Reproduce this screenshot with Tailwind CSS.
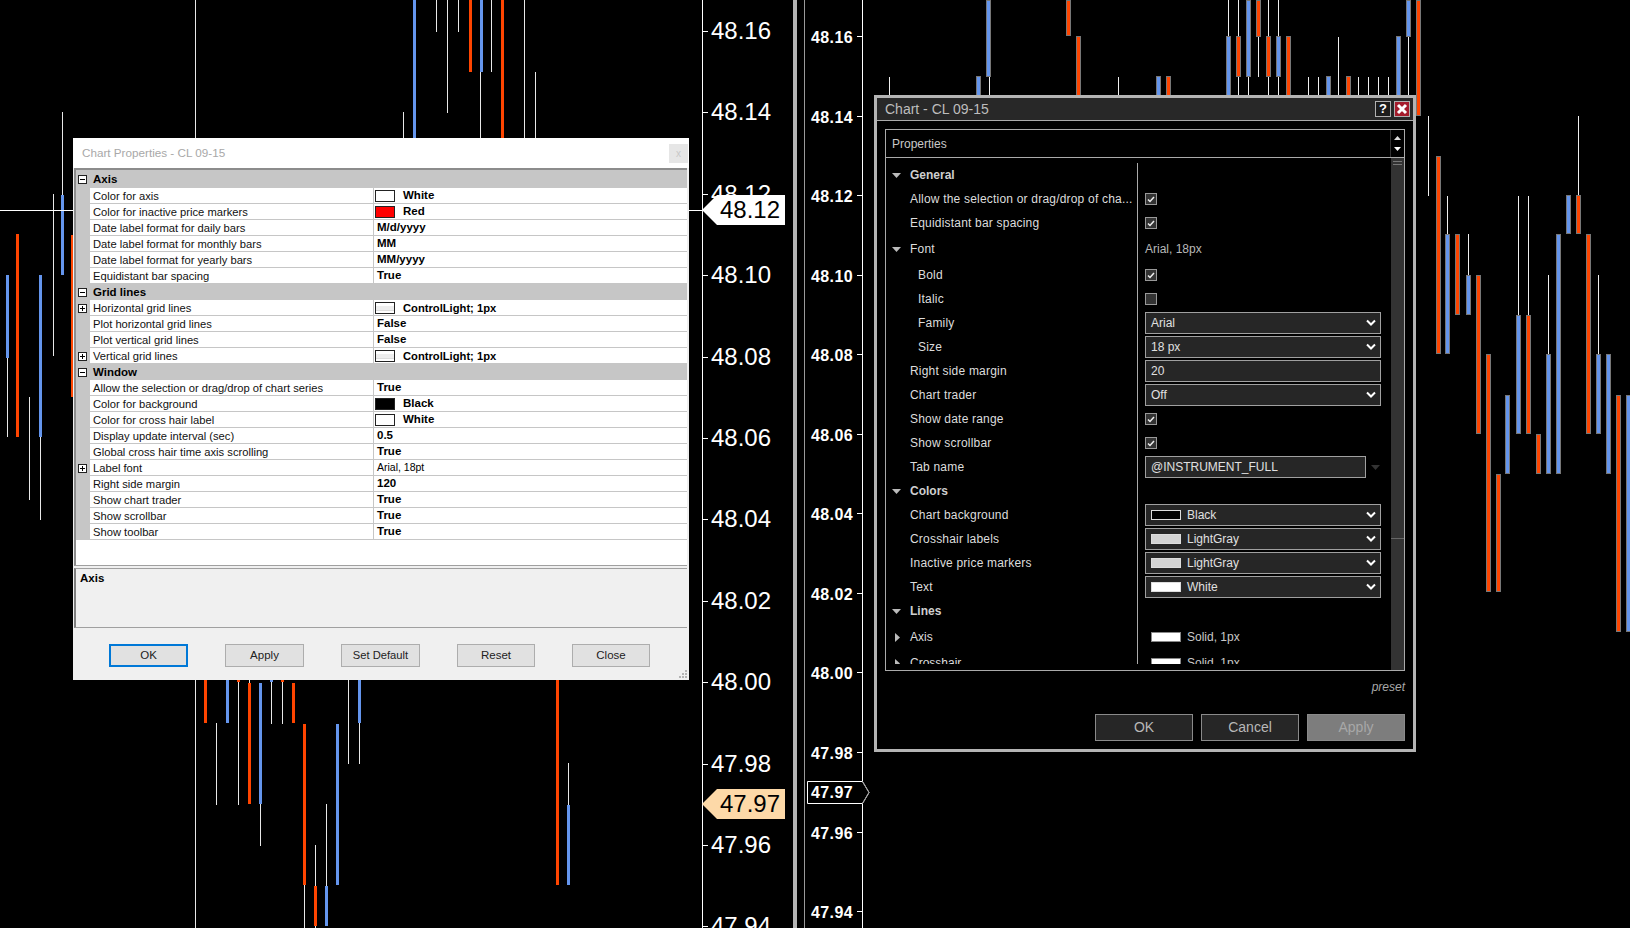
<!DOCTYPE html>
<html>
<head>
    <title>Chart properties</title>
    <script src="https://cdn.jsdelivr.net/npm/@tailwindcss/browser@4"></script>
</head>
<body class="bg-black font-['Liberation_Sans',Arial,sans-serif]">
<div class="relative w-[1630px] h-[928px] overflow-hidden bg-black" id="desk">

    <!-- charts go in here -->
    <div id="leftChart" class="absolute inset-0"></div>
    <div id="rightChart" class="absolute inset-0"></div>

    <!-- separator between the two chart windows -->
    <div class="absolute left-[793px] top-0 w-[4px] h-[928px] bg-[#b4b4b4]"></div>
    <div class="absolute left-[804px] top-0 w-px h-[928px] bg-[#9a9a9a]"></div>

    <!-- price markers -->
    <div class="absolute left-[702px] top-[195px] w-[83px] h-[30px] flex items-center">
        <svg class="absolute inset-0" width="83" height="30"><polygon points="0,15 15,0 83,0 83,30 15,30" fill="#ffffff"/></svg>
        <span class="relative ml-[18px] text-[24px] text-black">48.12</span>
    </div>
    <div class="absolute left-[702px] top-[789px] w-[83px] h-[30px] flex items-center">
        <svg class="absolute inset-0" width="83" height="30"><polygon points="0,15 15,0 83,0 83,30 15,30" fill="#fdd9a8"/></svg>
        <span class="relative ml-[18px] text-[24px] text-black">47.97</span>
    </div>
    <div class="absolute left-[807px] top-[781px] w-[63px] h-[23px] flex items-center">
        <svg class="absolute inset-0" width="63" height="23"><polygon points="0.5,0.5 55.5,0.5 62,11.5 55.5,22.5 0.5,22.5" fill="#000" stroke="#fff"/><polyline points="55.5,0.5 62,11.5 55.5,22.5" fill="none" stroke="#999"/></svg>
        <span class="relative ml-[4px] pt-px text-[16px] font-bold tracking-[0.4px] text-white">47.97</span>
    </div>

    <!-- Left dialog: Chart Properties -->
    <div class="absolute left-[73px] top-[138px] w-[616px] h-[542px] bg-[#f0f0f0] flex flex-col">
        <div class="h-[30px] shrink-0 bg-white flex items-center justify-between pl-[9px] pr-px">
            <span class="text-[11.7px] text-[#a8a8a8]">Chart Properties - CL 09-15</span>
            <div class="w-[19px] h-[19px] bg-[#e6e6e6] flex items-center justify-center text-[10px] text-[#c8c8c8]">x</div>
        </div>
        <div class="ml-px w-[613px] h-[398px] shrink-0 border-l-2 border-t-2 border-b border-[#8c8c8c] border-b-[#a0a0a0] bg-white" id="propGrid"></div>
        <div class="ml-px mt-[2px] w-[613px] h-[60px] shrink-0 border-l-2 border-t border-b border-[#a0a0a0] border-l-[#808080] px-[4px] pt-[2px]">
            <div class="text-[11.5px] font-bold leading-[14px] text-black">Axis</div>
        </div>
        <div class="flex gap-[37px] pl-[36px] mt-[16px]">
            <div class="w-[79px] h-[23px] bg-[#e1e1e1] border-2 border-[#0078d7] flex items-center justify-center text-[11.5px] text-[#222]">OK</div>
            <div class="w-[79px] h-[23px] bg-[#e1e1e1] border border-[#adadad] flex items-center justify-center text-[11.5px] text-[#222]">Apply</div>
            <div class="w-[79px] h-[23px] bg-[#e1e1e1] border border-[#adadad] flex items-center justify-center text-[11.2px] text-[#222]">Set Default</div>
            <div class="w-[78px] h-[23px] bg-[#e1e1e1] border border-[#adadad] flex items-center justify-center text-[11.5px] text-[#222]">Reset</div>
            <div class="w-[78px] h-[23px] bg-[#e1e1e1] border border-[#adadad] flex items-center justify-center text-[11.5px] text-[#222]">Close</div>
        </div>
        <svg class="absolute right-[1px] bottom-[1px]" width="9" height="9" fill="#b4b4b4"><rect x="6" y="0" width="2" height="2"/><rect x="3" y="3" width="2" height="2"/><rect x="6" y="3" width="2" height="2"/><rect x="0" y="6" width="2" height="2"/><rect x="3" y="6" width="2" height="2"/><rect x="6" y="6" width="2" height="2"/></svg>
    </div>

    <!-- Right dialog: Chart - CL 09-15 -->
    <div class="absolute left-[874px] top-[95px] w-[542px] h-[657px] border-[3px] border-[#b4b4b4] bg-black flex flex-col">
        <div class="h-[23px] shrink-0 bg-[#282828] border-b border-[#aaaaaa] flex items-center justify-between pl-[8px] pr-[3px]">
            <span class="text-[14px] text-[#bdbdbd]">Chart - CL 09-15</span>
            <div class="flex gap-[3px]">
                <div class="w-[16px] h-[16px] border border-[#b0b0b0] bg-[#1c1c1c] flex items-center justify-center text-[13px] font-bold text-white">?</div>
                <div class="w-[16px] h-[16px] border border-[#b0b0b0] bg-[#a51c2c] flex items-center justify-center">
                    <svg width="12" height="12" viewBox="0 0 12 12"><path d="M2 2 L10 10 M10 2 L2 10" stroke="#fff" stroke-width="3"/></svg>
                </div>
            </div>
        </div>
        <div class="ml-[8px] mt-[8px] w-[520px] h-[542px] shrink-0 border border-[#aaaaaa] flex flex-col">
            <div class="h-[28px] shrink-0 border-b border-[#aaaaaa] flex justify-between">
                <span class="pl-[6px] pt-[7px] text-[12px] leading-[14px] text-[#c8c8c8]">Properties</span>
                <div class="w-[14px] border-l border-[#333] flex flex-col items-center justify-between py-[6px]">
                    <svg width="7" height="4"><polygon points="0,4 3.5,0 7,4" fill="#ddd"/></svg>
                    <svg width="7" height="4"><polygon points="0,0 7,0 3.5,4" fill="#fff"/></svg>
                </div>
            </div>
            <div class="flex flex-1 min-h-0">
                <div class="flex-1 min-w-0 pt-[5px]">
                    <div class="h-[501px] overflow-hidden" id="propList"></div>
                </div>
                <div class="w-[13px] bg-[#333333] flex flex-col">
                    <div class="h-[381px] border-b border-[#666] flex flex-col gap-[2px] items-center pt-[3px]">
                        <div class="w-[9px] h-px bg-[#777]"></div>
                        <div class="w-[9px] h-px bg-[#777]"></div>
                    </div>
                </div>
            </div>
        </div>
        <div class="mt-[8px] ml-[8px] w-[520px] text-right text-[12px] italic leading-[16px] text-[#a8a8a8]">preset</div>
        <div class="mt-[19px] ml-[218px] flex gap-[8px]">
            <div class="w-[98px] h-[27px] bg-[#262626] border border-[#8a8a8a] flex items-center justify-center text-[14px] text-[#b8b8b8]">OK</div>
            <div class="w-[98px] h-[27px] bg-[#262626] border border-[#8a8a8a] flex items-center justify-center text-[14px] text-[#b8b8b8]">Cancel</div>
            <div class="w-[98px] h-[27px] bg-[#7d7d7d] border border-[#8a8a8a] flex items-center justify-center text-[14px] text-[#a8a8a8]">Apply</div>
        </div>
    </div>
</div>

<script>
    // candles: [x, top, bottom]
    function addBars(host, list, cls, off) {
        list.forEach(function (b) {
            var d = document.createElement("div");
            d.className = cls;
            d.style.left = (b[0] - off) + "px";
            d.style.top = b[1] + "px";
            d.style.height = (b[2] - b[1]) + "px";
            host.appendChild(d);
        });
    }

    var left = document.getElementById("leftChart");
    var lWicks = [[7,358,437],[29,397,500],[40,437,520],[53,194,356],[62,112,195],[195,0,928],[403,112,138],[436,0,32],[447,0,113],[458,0,32],[480,72,138],[491,0,72],[524,0,138],[535,72,138],
        [216,723,805],[238,680,805],[249,680,683],[260,804,846],[271,680,724],[282,680,724],[304,885,928],[315,845,928],[326,804,886],[348,680,764],[359,723,764],[568,763,805]];
    var lBlue = [[7,275,358],[40,275,437],[62,195,275],[414,0,138],[481,0,72],[227,680,723],[260,683,804],[271,680,682],[326,886,926],[337,724,885],[359,680,723],[568,805,885]];
    var lOrange = [[17,234,437],[72,235,397],[470,0,72],[502,0,138],[205,680,723],[238,680,682],[249,683,804],[282,680,682],[293,683,723],[304,724,885],[315,886,926],[557,680,885]];
    addBars(left, lWicks, "absolute w-px bg-[#e8e8e8]", 0);
    addBars(left, lBlue, "absolute w-[3px] bg-[#6495ed]", 1);
    addBars(left, lOrange, "absolute w-[3px] bg-[#ff4500]", 1);

    var right = document.getElementById("rightChart");
    var rWicks = [[889,77,96],[989,77,96],[1118,77,96],[1228,0,36],[1238,0,36],[1238,77,96],[1248,77,96],[1258,36,77],[1268,0,36],[1268,77,96],[1278,0,36],[1278,77,96],[1308,77,96],[1318,77,96],[1338,37,96],[1358,77,96],[1368,77,96],[1378,77,96],[1388,77,96],[1408,37,96],[1428,116,196],[1447,196,234],[1468,234,275],[1518,196,315],[1528,196,315],[1548,275,395],[1578,116,195],[1598,275,354]];
    var rBlue = [[978,76,96],[988,0,77],[1158,76,96],[1228,36,96],[1248,0,77],[1278,36,77],[1328,76,96],[1398,36,96],[1408,0,37],[1447,234,354],[1468,275,315],[1507,395,474],[1518,315,434],[1548,354,474],[1558,234,474],[1568,195,234],[1598,354,434],[1608,354,474],[1628,395,632]];
    var rOrange = [[1068,0,36],[1078,36,96],[1168,76,96],[1238,36,77],[1258,0,37],[1268,36,77],[1288,36,96],[1348,76,96],[1418,0,116],[1438,156,354],[1457,234,315],[1478,275,434],[1488,354,592],[1498,474,592],[1528,315,434],[1538,434,474],[1578,195,234],[1588,234,434],[1618,395,632]];
    addBars(right, rWicks, "absolute w-px bg-[#f0f0f0]", 0);
    addBars(right, rBlue, "absolute w-[5px] bg-[#6495ed] border border-[#777777]", 2);
    addBars(right, rOrange, "absolute w-[5px] bg-[#ff4500] border border-[#777777]", 2);

    // axes
    var prices = ["48.16","48.14","48.12","48.10","48.08","48.06","48.04","48.02","48.00","47.98","47.96","47.94"];
    left.insertAdjacentHTML("beforeend", '<div class="absolute left-[702px] top-0 w-px h-[928px] bg-white"></div><div class="absolute left-0 top-[210px] w-[702px] h-px bg-white"></div>');
    right.insertAdjacentHTML("beforeend", '<div class="absolute left-[862px] top-0 w-px h-[928px] bg-white"></div>');
    prices.forEach(function (p, i) {
        var y = 31 + i * 81.4;
        left.insertAdjacentHTML("beforeend", '<div class="absolute left-[702px] h-px w-[6px] bg-white" style="top:' + Math.round(y) + 'px"></div>' +
            '<div class="absolute left-[711px] text-[24px] leading-[28px] text-white" style="top:' + Math.round(y - 14) + 'px">' + p + '</div>');
        var r = 36 + i * 79.56;
        right.insertAdjacentHTML("beforeend", '<div class="absolute left-[857px] h-px w-[5px] bg-white" style="top:' + Math.round(r) + 'px"></div>' +
            '<div class="absolute left-[811px] text-[16px] leading-[18px] font-bold tracking-[0.4px] text-white" style="top:' + Math.round(r - 7) + 'px">' + p + '</div>');
    });

    // left property grid
    var minus = '<svg width="9" height="9"><rect x="0.5" y="0.5" width="8" height="8" fill="#fff" stroke="#222"/><path d="M2 4.5H7" stroke="#000"/></svg>';
    var plus = '<svg width="9" height="9"><rect x="0.5" y="0.5" width="8" height="8" fill="#fff" stroke="#222"/><path d="M2 4.5H7M4.5 2V7" stroke="#000"/></svg>';
    var props = [
        ["c","Axis",18],
        ["Color for axis","White","#ffffff"],
        ["Color for inactive price markers","Red","#ff0000"],
        ["Date label format for daily bars","M/d/yyyy"],
        ["Date label format for monthly bars","MM"],
        ["Date label format for yearly bars","MM/yyyy"],
        ["Equidistant bar spacing","True"],
        ["c","Grid lines",16],
        ["Horizontal grid lines","ControlLight; 1px","line",1],
        ["Plot horizontal grid lines","False"],
        ["Plot vertical grid lines","False"],
        ["Vertical grid lines","ControlLight; 1px","line",1],
        ["c","Window",16],
        ["Allow the selection or drag/drop of chart series","True"],
        ["Color for background","Black","#000000"],
        ["Color for cross hair label","White","#ffffff"],
        ["Display update interval (sec)","0.5"],
        ["Global cross hair time axis scrolling","True"],
        ["Label font","Arial, 18pt",null,1,1],
        ["Right side margin","120"],
        ["Show chart trader","True"],
        ["Show scrollbar","True"],
        ["Show toolbar","True"]
    ];
    var g = "";
    props.forEach(function (p) {
        if (p[0] == "c") {
            g += '<div class="flex items-center bg-[#c6c6c6] pl-[2px] pt-px" style="height:' + p[2] + 'px">' + minus + '<span class="ml-[6px] pt-px text-[11.5px] font-bold text-black">' + p[1] + '</span></div>';
            return;
        }
        var val;
        if (p[2] == "line") {
            val = '<div class="w-[20px] h-[12px] border border-[#222] bg-white flex items-center ml-[1px]"><div class="w-full h-[5px] bg-[#eeeeee] border-b border-[#dddddd]"></div></div><span class="ml-[8px] text-[11.2px] font-bold text-black whitespace-pre">' + p[1] + '</span>';
        } else if (p[2]) {
            val = '<div class="w-[20px] h-[12px] border border-[#222] ml-[1px]" style="background:' + p[2] + '"></div><span class="ml-[8px] text-[11.5px] font-bold text-black">' + p[1] + '</span>';
        } else if (p[4]) {
            val = '<span class="ml-[3px] text-[10.5px] text-black">' + p[1] + '</span>';
        } else {
            val = '<span class="ml-[3px] text-[11.5px] font-bold text-black">' + p[1] + '</span>';
        }
        g += '<div class="flex h-[16px]"><div class="w-[14px] bg-[#c6c6c6] flex items-center pl-[2px]">' + (p[3] ? plus : '') + '</div>' +
            '<div class="w-[283px] border-b border-[#c6c6c6] pl-[3px] pt-px text-[11.2px] leading-[15px] text-[#111] whitespace-nowrap">' + p[0] + '</div>' +
            '<div class="flex-1 flex items-center pt-px border-b border-l border-[#c6c6c6]">' + val + '</div></div>';
    });
    document.getElementById("propGrid").innerHTML = g;

    // right property list
    var triDown = '<svg width="9" height="5"><polygon points="0,0 9,0 4.5,5" fill="#bbbbbb"/></svg>';
    var triRight = '<svg width="5" height="9"><polygon points="0,0 5,4.5 0,9" fill="#bbbbbb"/></svg>';
    var chev = '<svg class="absolute right-[4px] top-[6px]" width="10" height="8"><polyline points="1,1.5 5,5.5 9,1.5" fill="none" stroke="#fff" stroke-width="2"/></svg>';
    function check(on) {
        return '<div class="w-[12px] h-[12px] border border-[#999] bg-[#333] flex items-center justify-center">' +
            (on ? '<svg width="8" height="7"><polyline points="1,3.5 3,5.5 7,1" fill="none" stroke="#eee" stroke-width="1.5"/></svg>' : '') + '</div>';
    }
    function combo(text, swatch, noArrow) {
        return '<div class="relative w-[236px] h-[22px] bg-[#262626] border border-[#a0a0a0] flex items-center pl-[5px] text-[12px] text-[#e0e0e0]">' +
            (swatch ? '<div class="w-[30px] h-[10px] border border-[#dddddd] mr-[6px]" style="background:' + swatch + '"></div>' : '') +
            '<span>' + text + '</span>' + (noArrow ? '' : chev) + '</div>';
    }
    var rows = [
        [24,"General","",0,"cat"],
        [24,"Allow the selection or drag/drop of cha...",check(1),24],
        [24,"Equidistant bar spacing",check(1),24],
        [28,"Font",'<span class="text-[12px] text-[#b8b8b8]">Arial, 18px</span>',0,"tri"],
        [24,"Bold",check(1),32],
        [23,"Italic",check(0),32],
        [25,"Family",combo("Arial"),32],
        [24,"Size",combo("18 px"),32],
        [24,"Right side margin",combo("20",null,1),24],
        [24,"Chart trader",combo("Off"),24],
        [24,"Show date range",check(1),24],
        [24,"Show scrollbar",check(1),24],
        [24,"Tab name",'<div class="w-[221px] h-[22px] bg-[#262626] border border-[#a0a0a0] flex items-center pl-[5px] text-[12px] text-[#e0e0e0]">@INSTRUMENT_FULL</div><svg class="ml-[5px]" width="9" height="5"><polygon points="0,0 9,0 4.5,5" fill="#333"/></svg>',24],
        [24,"Colors","",0,"cat"],
        [24,"Chart background",combo("Black","#000000"),24],
        [24,"Crosshair labels",combo("LightGray","#d3d3d3"),24],
        [24,"Inactive price markers",combo("LightGray","#d3d3d3"),24],
        [24,"Text",combo("White","#ffffff"),24],
        [24,"Lines","",0,"cat"],
        [28,"Axis",'<div class="w-[30px] h-[10px] bg-white border border-[#888] ml-[6px] mr-[6px]"></div><span class="text-[12px] text-[#c8c8c8]">Solid, 1px</span>',0,"sub"],
        [24,"Crosshair",'<div class="w-[30px] h-[10px] bg-white border border-[#888] ml-[6px] mr-[6px]"></div><span class="text-[12px] text-[#c8c8c8]">Solid, 1px</span>',0,"sub"]
    ];
    var h = "";
    rows.forEach(function (r) {
        var label;
        if (r[4] == "cat") {
            label = '<div class="flex items-center pl-[6px]"><span class="w-[18px]">' + triDown + '</span><span class="text-[12px] font-bold text-[#cfcfcf]">' + r[1] + '</span></div>';
        } else if (r[4] == "tri") {
            label = '<div class="flex items-center pl-[6px]"><span class="w-[18px]">' + triDown + '</span><span class="text-[12px] tracking-[0.2px] text-[#dddddd]">' + r[1] + '</span></div>';
        } else if (r[4] == "sub") {
            label = '<div class="flex items-center pl-[9px]"><span class="w-[15px]">' + triRight + '</span><span class="text-[12px] text-[#dddddd]">' + r[1] + '</span></div>';
        } else {
            label = '<div class="text-[12px] tracking-[0.2px] text-[#dddddd] whitespace-nowrap" style="padding-left:' + r[3] + 'px">' + r[1] + '</div>';
        }
        h += '<div class="flex" style="height:' + r[0] + 'px"><div class="w-[252px] shrink-0 border-r border-[#aaaaaa] flex items-center">' + label + '</div>' +
            '<div class="flex items-center pl-[7px]">' + r[2] + '</div></div>';
    });
    document.getElementById("propList").innerHTML = h;
</script>
</body>
</html>
